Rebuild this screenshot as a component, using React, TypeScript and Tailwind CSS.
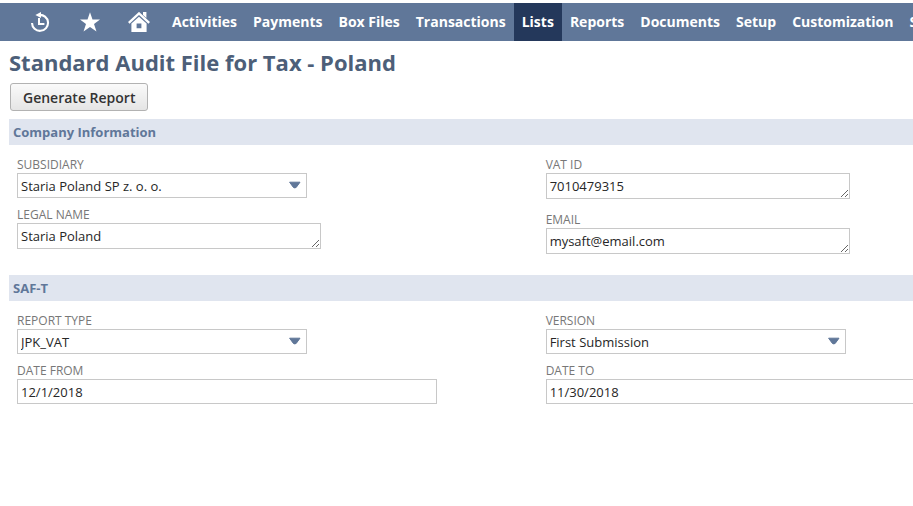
import { useId, useState, type ReactNode } from "react";

const NAV_ITEMS = [
  "Activities",
  "Payments",
  "Box Files",
  "Transactions",
  "Lists",
  "Reports",
  "Documents",
  "Setup",
  "Customization",
  "Support",
];

const LABEL_CLASS = "block text-xs leading-[17px] text-[#777777] uppercase";
const BOX_CLASS =
  "block border border-[#c8c8c8] bg-white px-[3px] text-[13px] text-[#262626] outline-none focus:border-[#607799]";

function HistoryIcon() {
  return (
    <svg width="20" height="20" viewBox="0 0 20 20" fill="none" aria-hidden="true">
      <path d="M9 2.9A8 8 0 1 1 2 11" stroke="white" strokeWidth="2.1" />
      <path d="M5.4 3L11 0v6z" fill="white" />
      <path d="M9 6v6h5.4" stroke="white" strokeWidth="2" />
    </svg>
  );
}

function StarIcon() {
  return (
    <svg width="20" height="20" viewBox="0 0 20 20" fill="white" aria-hidden="true">
      <path d="M10 .2l2.5 7.2h7.5l-6 4.6 2.5 7.6-6.5-4.6-6.5 4.6L6 12 0 7.4h7.5z" />
    </svg>
  );
}

function HomeIcon() {
  return (
    <svg width="22" height="20" viewBox="0 0 22 20" aria-hidden="true">
      <path d="M15 0h3.4v6l-3.4-3z" fill="white" />
      <path d="M.8 10.8L11 1.4l10.2 9.4" fill="none" stroke="white" strokeWidth="2.3" />
      <path
        d="M11 4.8l7.6 6.8V20H3.4v-8.4zM8.6 11.4v4.8h4.8v-4.8z"
        fill="white"
        fillRule="evenodd"
      />
    </svg>
  );
}

const SHORTCUTS: { label: string; icon: ReactNode }[] = [
  { label: "Recent records", icon: <HistoryIcon /> },
  { label: "Shortcuts", icon: <StarIcon /> },
  { label: "Home", icon: <HomeIcon /> },
];

function SelectField({
  label,
  options,
  width,
}: {
  label: string;
  options: string[];
  width: string;
}) {
  const id = useId();
  return (
    <div>
      <label htmlFor={id} className={LABEL_CLASS}>
        {label}
      </label>
      <div className={`relative ${width}`}>
        <select id={id} className={`${BOX_CLASS} h-[25px] w-full appearance-none pt-0.5`}>
          {options.map((option) => (
            <option key={option}>{option}</option>
          ))}
        </select>
        <svg
          className="pointer-events-none absolute top-2 right-1.5"
          width="12"
          height="8"
          viewBox="0 0 12 8"
          aria-hidden="true"
        >
          <path
            d="M.6 1.2h10.4L7.2 6.4q-1.4 1-2.8 0z"
            fill="#607799"
            stroke="#607799"
            strokeLinejoin="round"
          />
        </svg>
      </div>
    </div>
  );
}

function TextAreaField({ label, initial }: { label: string; initial: string }) {
  const id = useId();
  const [value, setValue] = useState(initial);
  return (
    <div className="pb-1">
      <label htmlFor={id} className={LABEL_CLASS}>
        {label}
      </label>
      <textarea
        id={id}
        rows={1}
        value={value}
        onChange={(e) => setValue(e.target.value)}
        className={`${BOX_CLASS} h-[26px] w-[304px] resize overflow-hidden leading-6`}
      />
    </div>
  );
}

function DateField({ label, initial }: { label: string; initial: string }) {
  const id = useId();
  const [value, setValue] = useState(initial);
  return (
    <div>
      <label htmlFor={id} className={LABEL_CLASS}>
        {label}
      </label>
      <input
        id={id}
        type="text"
        value={value}
        onChange={(e) => setValue(e.target.value)}
        className={`${BOX_CLASS} h-[25px] w-[420px]`}
      />
    </div>
  );
}

function Section({ title, children }: { title: string; children: ReactNode }) {
  return (
    <section>
      <h2 className="bg-[#e0e5ef] px-1 text-[13px] leading-[26px] font-bold text-[#607799]">
        {title}
      </h2>
      <div className="grid grid-cols-[59fr_41fr] pt-[11px] pb-[17px] pl-2">{children}</div>
    </section>
  );
}

function Column({ children }: { children: ReactNode }) {
  return <div className="flex min-w-0 flex-col gap-2">{children}</div>;
}

export default function App() {
  return (
    <div className="overflow-hidden bg-white pt-[3px] font-['Open_Sans',sans-serif]">
      <nav className="flex h-[38px] items-stretch bg-[#607799] pl-[14px]">
        {SHORTCUTS.map(({ label, icon }) => (
          <a
            key={label}
            href="#"
            aria-label={label}
            className="flex w-[50px] shrink-0 items-center justify-end pr-3.5"
          >
            {icon}
          </a>
        ))}
        {NAV_ITEMS.map((item) => (
          <a
            key={item}
            href="#"
            className={`flex shrink-0 items-center px-2 text-sm font-bold text-white ${
              item === "Lists" ? "bg-[#24385b]" : "hover:bg-[#24385b]"
            }`}
          >
            {item}
          </a>
        ))}
      </nav>

      <main className="pl-[9px]">
        <h1 className="pt-1.5 text-[22px] leading-[30px] font-bold text-[#4d5f79]">
          Standard Audit File for Tax - Poland
        </h1>
        <div className="px-px pt-1.5 pb-2">
          <button
            type="button"
            className="h-7 rounded-[3px] border border-[#b2b2b2] bg-linear-to-b from-[#fafafa] to-[#e5e5e5] px-3 pt-0.5 text-sm font-semibold text-[#333333]"
          >
            Generate Report
          </button>
        </div>

        <Section title="Company Information">
          <Column>
            <SelectField
              label="Subsidiary"
              options={["Staria Poland SP z. o. o."]}
              width="w-[290px]"
            />
            <TextAreaField label="Legal Name" initial="Staria Poland" />
          </Column>
          <Column>
            <TextAreaField label="VAT ID" initial="7010479315" />
            <TextAreaField label="Email" initial="mysaft@email.com" />
          </Column>
        </Section>

        <Section title="SAF-T">
          <Column>
            <SelectField label="Report Type" options={["JPK_VAT"]} width="w-[290px]" />
            <DateField label="Date From" initial="12/1/2018" />
          </Column>
          <Column>
            <SelectField label="Version" options={["First Submission"]} width="w-[300px]" />
            <DateField label="Date To" initial="11/30/2018" />
          </Column>
        </Section>
      </main>
    </div>
  );
}
